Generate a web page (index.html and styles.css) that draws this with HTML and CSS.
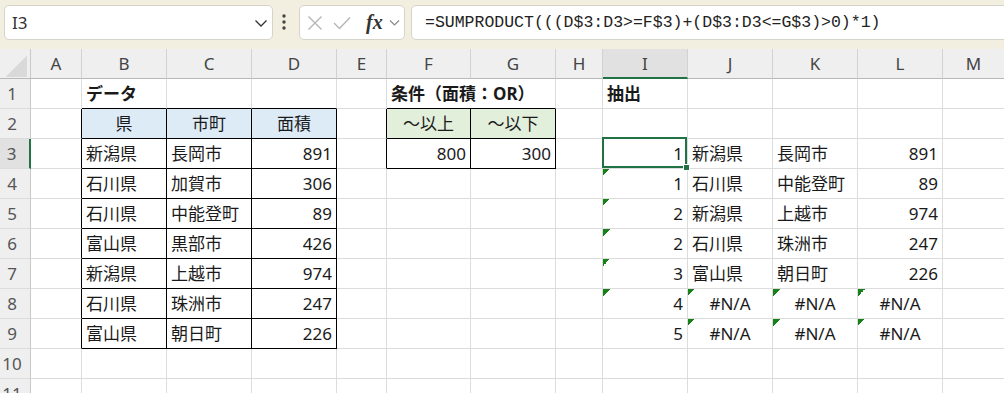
FILE: index.html
```html
<!DOCTYPE html>
<html lang="ja">
<head>
  <meta charset="UTF-8" />
  <title>Excel - SUMPRODUCT OR</title>
  <link rel="stylesheet" href="styles.css">
</head>
<body>

  <!-- Name box / formula bar -->
  <div class="bar">
    <div class="namebox">
      <span>I3</span>
      <svg width="14" height="10" viewBox="0 0 14 10"><path d="M1.5 2.5 L7 8 L12.5 2.5" fill="none" stroke="#333" stroke-width="1.3"/></svg>
    </div>
    <svg class="dots" width="10" height="20" viewBox="0 0 10 20"><circle cx="5" cy="3" r="1.7" fill="#444"/><circle cx="5" cy="9" r="1.7" fill="#444"/><circle cx="5" cy="15" r="1.7" fill="#444"/></svg>
    <div class="fxbox">
      <svg class="cancel" width="16" height="16" viewBox="0 0 16 16"><path d="M1.5 1.5 L14.5 14.5 M14.5 1.5 L1.5 14.5" stroke="#b5b5b5" stroke-width="1.4"/></svg>
      <svg class="enter" width="18" height="14" viewBox="0 0 18 14"><path d="M1 7 L6.5 12.5 L17 1.5" fill="none" stroke="#b5b5b5" stroke-width="1.4"/></svg>
      <span class="fx">fx</span>
      <svg class="more" width="11" height="8" viewBox="0 0 11 8"><path d="M1 1.5 L5.5 6 L10 1.5" fill="none" stroke="#8a8a8a" stroke-width="1.2"/></svg>
    </div>
    <div class="formula">=SUMPRODUCT(((D$3:D3&gt;=F$3)+(D$3:D3&lt;=G$3)&gt;0)*1)</div>
  </div>

  <!-- Sheet grid -->
  <div class="sheet">
    <!-- column headers -->
    <div class="corner"></div>
    <div class="ch">A</div><div class="ch">B</div><div class="ch">C</div><div class="ch">D</div><div class="ch">E</div>
    <div class="ch">F</div><div class="ch">G</div><div class="ch">H</div><div class="ch on">I</div><div class="ch">J</div>
    <div class="ch">K</div><div class="ch">L</div><div class="ch">M</div>

    <!-- row 1 -->
    <div class="rh">1</div>
    <div class="c"></div><div class="c b bb">データ</div><div class="c bb"></div><div class="c bb"></div><div class="c"></div>
    <div class="c b bb span2">条件（面積：OR）</div><div class="c"></div><div class="c b">抽出</div>
    <div class="c"></div><div class="c"></div><div class="c"></div><div class="c"></div>

    <!-- row 2 -->
    <div class="rh">2</div>
    <div class="c br"></div><div class="c ctr hb br bb">県</div><div class="c ctr hb br bb">市町</div><div class="c ctr hb br bb">面積</div><div class="c br"></div>
    <div class="c ctr hg br bb">～以上</div><div class="c ctr hg br bb">～以下</div><div class="c"></div><div class="c"></div>
    <div class="c"></div><div class="c"></div><div class="c"></div><div class="c"></div>

    <!-- row 3 -->
    <div class="rh on">3</div>
    <div class="c br"></div><div class="c br bb">新潟県</div><div class="c br bb">長岡市</div><div class="c r br bb">891</div><div class="c br"></div>
    <div class="c r br bb">800</div><div class="c r br bb">300</div><div class="c"></div><div class="c r sel">1</div>
    <div class="c">新潟県</div><div class="c">長岡市</div><div class="c r">891</div><div class="c"></div>

    <!-- row 4 -->
    <div class="rh">4</div>
    <div class="c br"></div><div class="c br bb">石川県</div><div class="c br bb">加賀市</div><div class="c r br bb">306</div><div class="c"></div>
    <div class="c"></div><div class="c"></div><div class="c"></div><div class="c r err">1</div>
    <div class="c">石川県</div><div class="c">中能登町</div><div class="c r">89</div><div class="c"></div>

    <!-- row 5 -->
    <div class="rh">5</div>
    <div class="c br"></div><div class="c br bb">石川県</div><div class="c br bb">中能登町</div><div class="c r br bb">89</div><div class="c"></div>
    <div class="c"></div><div class="c"></div><div class="c"></div><div class="c r err">2</div>
    <div class="c">新潟県</div><div class="c">上越市</div><div class="c r">974</div><div class="c"></div>

    <!-- row 6 -->
    <div class="rh">6</div>
    <div class="c br"></div><div class="c br bb">富山県</div><div class="c br bb">黒部市</div><div class="c r br bb">426</div><div class="c"></div>
    <div class="c"></div><div class="c"></div><div class="c"></div><div class="c r err">2</div>
    <div class="c">石川県</div><div class="c">珠洲市</div><div class="c r">247</div><div class="c"></div>

    <!-- row 7 -->
    <div class="rh">7</div>
    <div class="c br"></div><div class="c br bb">新潟県</div><div class="c br bb">上越市</div><div class="c r br bb">974</div><div class="c"></div>
    <div class="c"></div><div class="c"></div><div class="c"></div><div class="c r err">3</div>
    <div class="c">富山県</div><div class="c">朝日町</div><div class="c r">226</div><div class="c"></div>

    <!-- row 8 -->
    <div class="rh">8</div>
    <div class="c br"></div><div class="c br bb">石川県</div><div class="c br bb">珠洲市</div><div class="c r br bb">247</div><div class="c"></div>
    <div class="c"></div><div class="c"></div><div class="c"></div><div class="c r err">4</div>
    <div class="c ctr err">#N/A</div><div class="c ctr err">#N/A</div><div class="c ctr err">#N/A</div><div class="c"></div>

    <!-- row 9 -->
    <div class="rh">9</div>
    <div class="c br"></div><div class="c br bb">富山県</div><div class="c br bb">朝日町</div><div class="c r br bb">226</div><div class="c"></div>
    <div class="c"></div><div class="c"></div><div class="c"></div><div class="c r">5</div>
    <div class="c ctr err">#N/A</div><div class="c ctr err">#N/A</div><div class="c ctr err">#N/A</div><div class="c"></div>

    <!-- row 10 -->
    <div class="rh">10</div>
    <div class="c"></div><div class="c"></div><div class="c"></div><div class="c"></div><div class="c"></div>
    <div class="c"></div><div class="c"></div><div class="c"></div><div class="c"></div>
    <div class="c"></div><div class="c"></div><div class="c"></div><div class="c"></div>

    <!-- row 11 -->
    <div class="rh">11</div>
    <div class="c"></div><div class="c"></div><div class="c"></div><div class="c"></div><div class="c"></div>
    <div class="c"></div><div class="c"></div><div class="c"></div><div class="c"></div>
    <div class="c"></div><div class="c"></div><div class="c"></div><div class="c"></div>
  </div>

</body>
</html>
```

FILE: styles.css
```css
body {
  margin: 0;
  width: 1004px;
  height: 393px;
  overflow: hidden;
  background: #fff;
  font-family: "Noto Sans", "Noto Sans CJK JP", sans-serif;
}

/* formula bar */
.bar {
  height: 49px;
  box-sizing: border-box;
  padding: 5px 0 0 4px;
  background: #f3efe0;
  display: flex;
  align-items: flex-start;
  white-space: nowrap;
}
.bar > * {
  flex: none;
}
.namebox, .fxbox, .formula {
  height: 35px;
  box-sizing: border-box;
  background: #fff;
  border: 1px solid #d6d3c8;
  border-radius: 5px;
  display: flex;
  align-items: center;
}
.namebox {
  width: 269px;
  justify-content: space-between;
  padding: 0 4px 0 7px;
  font-size: 17px;
  color: #333;
}
.dots {
  margin: 8px 10px 0 6px;
}
.fxbox {
  width: 106px;
  padding-left: 7px;
}
.enter { margin-left: 10px; }
.fx {
  font-family: "Liberation Serif", serif;
  font-style: italic;
  font-weight: bold;
  font-size: 20px;
  color: #333;
  margin-left: 15px;
}
.more { margin-left: 6px; }
.formula {
  width: 610px;
  margin-left: 6px;
  padding-left: 13px;
  font-family: "Liberation Mono", monospace;
  font-size: 16.5px;
  color: #222;
}

/* sheet */
.sheet {
  display: grid;
  grid-template-columns: 31px 51px 85px 85px 85px 50px 84px 85px 47px 85px 85px 85px 85px 62px;
  grid-auto-rows: 30px;
  font-size: 17px;
  line-height: 29px;
}
.corner {
  border-right: 1px solid #c8c8c8;
  border-bottom: 1px solid #b8b8b8;
  background: #efefef linear-gradient(to bottom right, transparent 50%, #d9d9d9 50%) 6px 6px / 21px 22px no-repeat;
}
.ch {
  background: #efefef;
  border-right: 1px solid #d2d2d2;
  border-bottom: 1px solid #b8b8b8;
  text-align: center;
  color: #444;
}
.ch.on {
  background: #e1e1e1;
  border-bottom: 2px solid #217346;
}
.rh {
  background: #efefef;
  border-right: 1px solid #c8c8c8;
  border-bottom: 1px solid #dcdcdc;
  padding-right: 6px;
  text-align: center;
  color: #555;
}
.rh.on {
  background: #e1e1e1;
  border-right: 2px solid #217346;
}
.c {
  border-right: 1px solid #dcdcdc;
  border-bottom: 1px solid #dcdcdc;
  padding: 0 4px;
  color: #1a1a1a;
  white-space: nowrap;
}
.span2 { grid-column: span 2; }
.b { font-weight: bold; }
.r { text-align: right; }
.ctr { text-align: center; }
.br { border-right-color: #000; }
.bb { border-bottom-color: #000; }
.hb { background: #ddebf7; }
.hg { background: #e2efda; }
.err {
  background: linear-gradient(135deg, #178017 50%, transparent 50%) 0 0 / 7px 7px no-repeat;
}
.sel {
  position: relative;
}
.sel::before {
  content: "";
  position: absolute;
  left: -1px;
  top: -2px;
  right: 0;
  bottom: 0;
  border: 2px solid #217346;
}
.sel::after {
  content: "";
  position: absolute;
  right: -3px;
  bottom: -3px;
  width: 5px;
  height: 5px;
  background: #217346;
  border: 1px solid #fff;
}
```
